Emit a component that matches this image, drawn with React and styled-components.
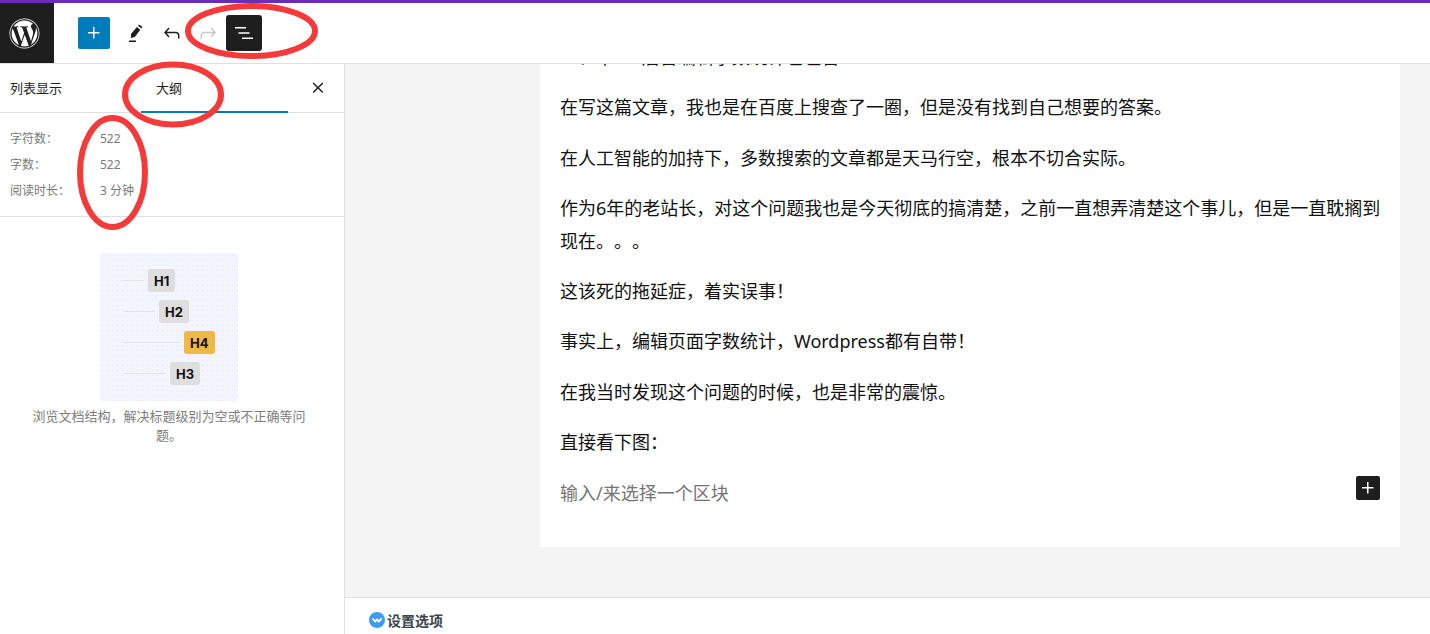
import styled, { createGlobalStyle } from "styled-components";
import { FaWordpress } from "react-icons/fa";

const GlobalStyle = createGlobalStyle`
  html, body {
    margin: 0;
    padding: 0;
    background: #fff;
    overflow: hidden;
  }
  * {
    box-sizing: border-box;
  }
`;

const FONT = `"Noto Sans", "Noto Sans CJK SC", sans-serif`;

const Page = styled.div`
  position: relative;
  width: 1430px;
  height: 634px;
  display: flex;
  flex-direction: column;
  font-family: ${FONT};
  color: #1e1e1e;
  overflow: hidden;
  text-spacing-trim: space-all;
`;

const TopStrip = styled.div`
  height: 3px;
  flex: none;
  background: #6c2eb0;
`;

const Toolbar = styled.header`
  height: 61px;
  flex: none;
  display: flex;
  align-items: flex-start;
  background: #fff;
  border-bottom: 1px solid #e0e0e0;
`;

const LogoBox = styled.div`
  width: 54px;
  height: 60px;
  padding-right: 6px;
  display: flex;
  align-items: center;
  justify-content: center;
  background: #1e1e1e;
  color: #fff;
`;

const ToolGroup = styled.div`
  display: flex;
  align-items: center;
  height: 60px;
  margin-left: 24px;
`;

const AddButton = styled.div`
  width: 32px;
  height: 32px;
  margin-right: 8px;
  border-radius: 2px;
  background: #007cba;
  color: #fff;
  display: flex;
  align-items: center;
  justify-content: center;
`;

const ToolIcon = styled.div`
  width: 36px;
  height: 36px;
  display: flex;
  align-items: center;
  justify-content: center;
  border-radius: 3px;
  color: ${(p) => (p.$muted ? "#c8c8c8" : p.$active ? "#fff" : "#1e1e1e")};
  background: ${(p) => (p.$active ? "#1e1e1e" : "transparent")};
`;

const Body = styled.div`
  flex: 1;
  min-height: 0;
  display: flex;
`;

const Sidebar = styled.aside`
  width: 345px;
  flex: none;
  background: #fff;
  border-right: 1px solid #e0e0e0;
`;

const TabBar = styled.div`
  height: 49px;
  display: flex;
  align-items: stretch;
  border-bottom: 1px solid #e0e0e0;
`;

const Tab = styled.div`
  width: ${(p) => p.$width}px;
  font-size: 13px;
  line-height: 48px;
  color: #1e1e1e;
  padding-left: ${(p) => p.$pad}px;
  margin-bottom: -1px;
  border-bottom: 2px solid ${(p) => (p.$active ? "#007cba" : "transparent")};
`;

const CloseButton = styled.div`
  margin-left: auto;
  width: 56px;
  padding-left: 4px;
  display: flex;
  align-items: center;
  justify-content: center;
`;

const Stats = styled.dl`
  margin: 0;
  height: 104px;
  padding: 12px 10px 0;
  display: grid;
  grid-template-columns: 90px 1fr;
  grid-auto-rows: 26px;
  align-items: center;
  font-size: 12px;
  color: #7a7a7a;
  border-bottom: 1px solid #e0e0e0;
`;

const StatLabel = styled.dt``;

const StatValue = styled.dd`
  margin: 0;
`;

const Empty = styled.div`
  padding: 36px 33px 0 27px;
  display: flex;
  flex-direction: column;
  align-items: center;
`;

const Hint = styled.p`
  margin: 0;
  padding-top: 6px;
  font-size: 13px;
  line-height: 19px;
  color: #7d7d7d;
  text-align: center;
`;

const Illustration = styled.div`
  width: 138px;
  height: 148px;
  padding: 16px 0 0 24px;
  display: flex;
  flex-direction: column;
  gap: 8px;
  border-radius: 4px;
  background-color: #f2f6fc;
  background-image: radial-gradient(#e6ebf2 0.6px, transparent 0.7px);
  background-size: 5px 5px;
`;

const HeadingRow = styled.div`
  height: 23px;
  display: flex;
  align-items: center;
  gap: 4px;
`;

const HeadingLine = styled.div`
  width: ${(p) => p.$len}px;
  height: 1px;
  background: #e6e3e3;
`;

const HeadingChip = styled.div`
  height: 23px;
  padding: 0 6px;
  display: flex;
  align-items: center;
  border-radius: 3px;
  font-family: Inter, sans-serif;
  font-size: 13px;
  font-weight: 700;
  color: #111;
  background: ${(p) => (p.$warn ? "#f2b845" : "#dedede")};
`;

const Main = styled.main`
  flex: 1;
  min-width: 0;
  display: flex;
  flex-direction: column;
  background: #f4f4f4;
`;

const Canvas = styled.div`
  flex: 1;
  min-height: 0;
  overflow: hidden;
  padding: 0 30px 0 195px;
`;

const Sheet = styled.div`
  position: relative;
  height: 483px;
  padding: 0 20px;
  background: #fff;
  overflow: hidden;
`;

const Paragraph = styled.p`
  margin: 0 -3px 18px 0;
  font-size: 18px;
  line-height: 32.4px;
  color: ${(p) => (p.$placeholder ? "#757575" : "#111")};
  &:first-child {
    margin-top: -23px;
  }
`;

const InsertButton = styled.div`
  position: absolute;
  right: 20px;
  top: 412px;
  width: 24px;
  height: 24px;
  border-radius: 2px;
  background: #1e1e1e;
  color: #fff;
  display: flex;
  align-items: center;
  justify-content: center;
`;

const Footer = styled.footer`
  height: 37px;
  flex: none;
  display: flex;
  align-items: center;
  gap: 2px;
  padding: 7px 0 0 24px;
  background: #fff;
  border-top: 1px solid #e0e0e0;
  font-size: 14px;
  font-weight: 700;
  color: #3c434a;
`;

const Marks = styled.svg`
  position: absolute;
  left: 0;
  top: 0;
  pointer-events: none;
`;

const paragraphs = [
  "一、中WP后台编辑字数统计也包含",
  "在写这篇文章，我也是在百度上搜查了一圈，但是没有找到自己想要的答案。",
  "在人工智能的加持下，多数搜索的文章都是天马行空，根本不切合实际。",
  "作为6年的老站长，对这个问题我也是今天彻底的搞清楚，之前一直想弄清楚这个事儿，但是一直耽搁到现在。。。",
  "这该死的拖延症，着实误事！",
  "事实上，编辑页面字数统计，Wordpress都有自带！",
  "在我当时发现这个问题的时候，也是非常的震惊。",
  "直接看下图：",
];

const headings = [
  { label: "H1", len: 20 },
  { label: "H2", len: 31 },
  { label: "H4", len: 56, warn: true },
  { label: "H3", len: 42 },
];

const PlusIcon = ({ size = 24 }) => (
  <svg width={size} height={size} viewBox="0 0 24 24" fill="currentColor">
    <path d="M11 12.5V17.5H12.5V12.5H17.5V11H12.5V6H11V11H6V12.5H11Z" />
  </svg>
);

const App = () => {
  return (
    <Page>
      <GlobalStyle />
      <TopStrip />
      <Toolbar>
        <LogoBox>
          <FaWordpress size={31} />
        </LogoBox>
        <ToolGroup>
          <AddButton>
            <PlusIcon />
          </AddButton>
          <ToolIcon>
            <svg width="24" height="24" viewBox="0 0 24 24" fill="currentColor">
              <path d="M12.9 6.1l3.4 2.6-5.5 7.3-3.9 1.1.1-4.1 5.9-6.9zM14 4.8l1.1-1.3 3.4 2.6-1.1 1.5-3.4-2.8zM5 19.5h7V21H5z" />
            </svg>
          </ToolIcon>
          <ToolIcon>
            <svg width="24" height="24" viewBox="0 0 24 24" fill="currentColor">
              <path d="M18.3 11.7c-.6-.6-1.4-.9-2.3-.9H6.7l2.9-3.3-1.1-1-4.5 5L8.5 16.5l1-1.1-2.8-3.1H16c.5 0 .9.2 1.2.5.7.7.8 1.6.8 2.7V17.5h1.5v-2c0-1.4-.1-2.7-1.2-3.8z" />
            </svg>
          </ToolIcon>
          <ToolIcon $muted>
            <svg width="24" height="24" viewBox="0 0 24 24" fill="currentColor">
              <path d="M15.6 6.5l-1.1 1 2.9 3.3H8c-.9 0-1.7.3-2.3.9-1.1 1.1-1.2 2.4-1.2 3.8v2H6v-2c0-1.1.1-2 .8-2.7.3-.3.7-.5 1.2-.5h9.3l-2.8 3.1 1 1.1 4.5-5.1-4.4-4.9z" />
            </svg>
          </ToolIcon>
          <ToolIcon $active>
            <svg width="24" height="24" viewBox="0 0 24 24" fill="currentColor">
              <path d="M3 6h11v1.5H3zM6.5 11.2h11v1.5h-11zM10 16.5h11V18H10z" />
            </svg>
          </ToolIcon>
        </ToolGroup>
      </Toolbar>
      <Body>
        <Sidebar>
          <TabBar>
            <Tab $width={141} $pad={10}>列表显示</Tab>
            <Tab $width={147} $active $pad={15}>大纲</Tab>
            <CloseButton>
              <svg width="24" height="24" viewBox="0 0 24 24" fill="currentColor">
                <path d="M13 11.8l4.3-4.3-1-1-4.3 4.2-4.3-4.2-1 1 4.2 4.3-4.2 4.2 1 1.1 4.3-4.3 4.3 4.3 1-1.1z" />
              </svg>
            </CloseButton>
          </TabBar>
          <Stats>
            <StatLabel>字符数：</StatLabel>
            <StatValue>522</StatValue>
            <StatLabel>字数：</StatLabel>
            <StatValue>522</StatValue>
            <StatLabel>阅读时长：</StatLabel>
            <StatValue>3 分钟</StatValue>
          </Stats>
          <Empty>
            <Illustration>
              {headings.map((h) => (
                <HeadingRow key={h.label}>
                  <HeadingLine $len={h.len} />
                  <HeadingChip $warn={h.warn}>{h.label}</HeadingChip>
                </HeadingRow>
              ))}
            </Illustration>
            <Hint>浏览文档结构，解决标题级别为空或不正确等问题。</Hint>
          </Empty>
        </Sidebar>
        <Main>
          <Canvas>
            <Sheet>
              {paragraphs.map((text) => (
                <Paragraph key={text}>{text}</Paragraph>
              ))}
              <Paragraph $placeholder>输入/来选择一个区块</Paragraph>
              <InsertButton>
                <PlusIcon />
              </InsertButton>
            </Sheet>
          </Canvas>
          <Footer>
            <svg width="16" height="16" viewBox="0 0 18 18">
              <circle cx="9" cy="9" r="9" fill="#3f9cf5" />
              <path d="M4 7.5l3 3 2-2 2 2 3.2-3.2" fill="none" stroke="#fff" strokeWidth="2.2" />
            </svg>
            设置选项
          </Footer>
        </Main>
      </Body>
      <Marks width="1430" height="634" viewBox="0 0 1430 634">
        <ellipse cx="251.5" cy="31" rx="63.5" ry="25" fill="none" stroke="#f63a3a" strokeWidth="6" />
        <ellipse cx="173" cy="94.5" rx="48" ry="30" fill="none" stroke="#f63a3a" strokeWidth="6" />
        <ellipse cx="112.5" cy="172.5" rx="32.5" ry="54.5" fill="none" stroke="#f63a3a" strokeWidth="6" />
      </Marks>
    </Page>
  );
};

export default App;
